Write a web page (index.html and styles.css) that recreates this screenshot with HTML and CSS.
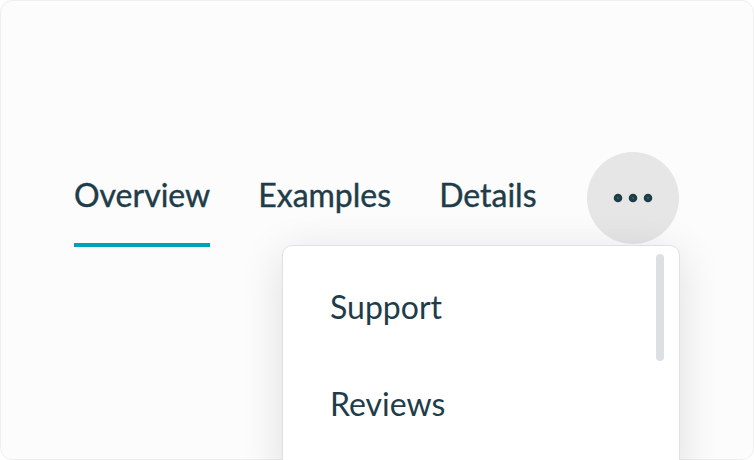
FILE: index.html
```html
<!DOCTYPE html>
<html lang="en">
<head>
<meta charset="utf-8">
<title>Tabs</title>
<link rel="stylesheet" href="styles.css">
</head>
<body>
<div class="card">
  <nav class="tabs">
    <a class="tab active">Overview</a>
    <a class="tab">Examples</a>
    <a class="tab">Details</a>
    <button class="more" aria-label="More">
      <svg width="40" height="10" viewBox="0 0 40 10">
        <circle cx="5" cy="5" r="2.8" fill="#3a5561" stroke="#1e3d49" stroke-width="3"/>
        <circle cx="20" cy="5" r="2.8" fill="#3a5561" stroke="#1e3d49" stroke-width="3"/>
        <circle cx="35" cy="5" r="2.8" fill="#3a5561" stroke="#1e3d49" stroke-width="3"/>
      </svg>
    </button>
  </nav>
  <div class="menu">
    <ul class="menu-list">
      <li class="menu-item">Support</li>
      <li class="menu-item">Reviews</li>
    </ul>
    <div class="scrollbar"></div>
  </div>
</div>
</body>
</html>
```
FILE: styles.css
```css
html, body {
  margin: 0;
  padding: 0;
  width: 754px;
  height: 460px;
  overflow: hidden;
  background: #ffffff;
}
.card {
  position: relative;
  box-sizing: border-box;
  width: 754px;
  height: 460px;
  border: 1px solid #efefef;
  border-radius: 12px;
  background: #fcfcfc;
  padding: 151px 0 0 73px;
  font-family: "Lato", "Liberation Sans", sans-serif;
  color: #1e3d49;
}
.tabs {
  display: flex;
  align-items: flex-start;
  gap: 48px;
}
.tab {
  box-sizing: border-box;
  height: 95px;
  display: flex;
  align-items: center;
  font-size: 32px;
  line-height: 36px;
  padding-bottom: 6px;
  border-bottom: 4px solid transparent;
  -webkit-text-stroke: 0.4px #1e3d49;
}
.tab.active {
  border-bottom-color: #00a0b7;
  padding-right: 0;
}
.more {
  width: 92px;
  height: 92px;
  border: none;
  border-radius: 50%;
  background: #e6e6e6;
  display: flex;
  align-items: center;
  justify-content: center;
  padding: 0;
  margin-left: 2px;
}
.more svg { display: block; }
.menu {
  position: absolute;
  left: 281px;
  top: 244px;
  width: 398px;
  height: 240px;
  box-sizing: border-box;
  background: #ffffff;
  border: 1px solid #dde1e3;
  border-radius: 10px;
  box-shadow: 0 8px 44px rgba(0, 0, 0, 0.12);
}
.menu-list {
  list-style: none;
  margin: 0;
  padding: 12px 0 0 0;
}
.menu-item {
  height: 97px;
  display: flex;
  align-items: center;
  padding-left: 47px;
  font-size: 32px;
  line-height: 36px;
}
.scrollbar {
  position: absolute;
  right: 15px;
  top: 8px;
  width: 8px;
  height: 107px;
  border-radius: 4px;
  background: #dce0e3;
}
```
